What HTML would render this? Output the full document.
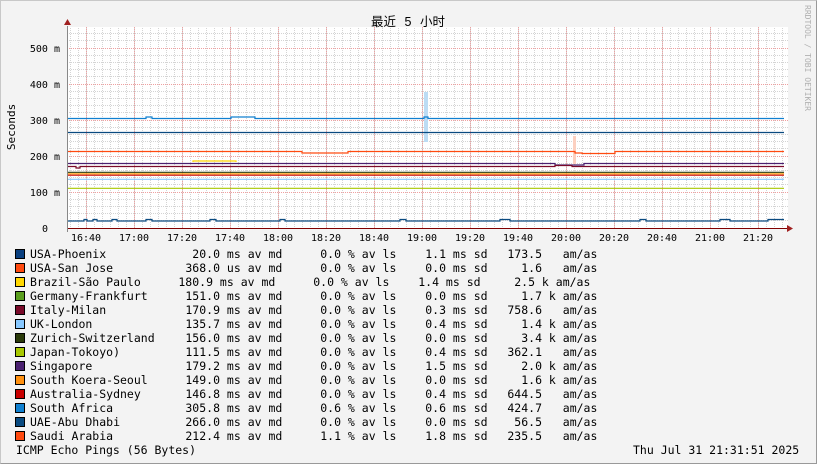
<!DOCTYPE html>
<html><head><meta charset="utf-8"><style>
html,body{margin:0;padding:0}
body{width:817px;height:464px;position:relative;overflow:hidden;background:#f3f3f3;font-family:"DejaVu Sans Mono","Liberation Mono","Noto Sans CJK SC",monospace;font-size:11.5px;color:#000}
.frame{position:absolute;left:0;top:0;width:815px;height:462px;border:1px solid #c8c8c8;border-right-color:#999;border-bottom-color:#999}
.r{position:absolute;left:0;height:14px;line-height:14px;width:817px;white-space:pre}
.r span{position:absolute;top:0}
.b{position:absolute;left:15px;top:2px;width:8px;height:8px;border:1px solid #000}
.n{left:30px}
.v{left:0;width:220px;text-align:right}
.p{left:0;width:341px;text-align:right}
.s{left:0;width:446px;text-align:right}
.a{left:0;width:542px;text-align:right}
</style></head><body>
<div class="frame"></div>
<svg width="817" height="464" style="position:absolute;left:0;top:0">
<defs>
<pattern id="mv" x="70" y="0" width="8" height="464" patternUnits="userSpaceOnUse"><line x1="0.5" y1="0" x2="0.5" y2="464" stroke="#d4d4d4" stroke-dasharray="1,1"/></pattern>
</defs>
<rect x="67" y="27" width="721" height="201" fill="#fff"/>
<rect x="67" y="27" width="721" height="201" fill="url(#mv)"/>
<g stroke="#d4d4d4" stroke-dasharray="1,1">
<line x1="67" x2="788" y1="220.5" y2="220.5"/><line x1="67" x2="788" y1="213.5" y2="213.5"/><line x1="67" x2="788" y1="206.5" y2="206.5"/><line x1="67" x2="788" y1="199.5" y2="199.5"/>
<line x1="67" x2="788" y1="184.5" y2="184.5"/><line x1="67" x2="788" y1="177.5" y2="177.5"/><line x1="67" x2="788" y1="170.5" y2="170.5"/><line x1="67" x2="788" y1="163.5" y2="163.5"/>
<line x1="67" x2="788" y1="148.5" y2="148.5"/><line x1="67" x2="788" y1="141.5" y2="141.5"/><line x1="67" x2="788" y1="134.5" y2="134.5"/><line x1="67" x2="788" y1="127.5" y2="127.5"/>
<line x1="67" x2="788" y1="112.5" y2="112.5"/><line x1="67" x2="788" y1="105.5" y2="105.5"/><line x1="67" x2="788" y1="98.5" y2="98.5"/><line x1="67" x2="788" y1="91.5" y2="91.5"/>
<line x1="67" x2="788" y1="76.5" y2="76.5"/><line x1="67" x2="788" y1="69.5" y2="69.5"/><line x1="67" x2="788" y1="62.5" y2="62.5"/><line x1="67" x2="788" y1="55.5" y2="55.5"/>
<line x1="67" x2="788" y1="40.5" y2="40.5"/><line x1="67" x2="788" y1="33.5" y2="33.5"/>
</g>
<g stroke="#f0a0a0" stroke-dasharray="1,1">
<line x1="67" x2="788" y1="192.5" y2="192.5"/><line x1="67" x2="788" y1="156.5" y2="156.5"/><line x1="67" x2="788" y1="120.5" y2="120.5"/><line x1="67" x2="788" y1="84.5" y2="84.5"/><line x1="67" x2="788" y1="48.5" y2="48.5"/>
<line x1="86.5" x2="86.5" y1="27" y2="228"/><line x1="134.5" x2="134.5" y1="27" y2="228"/><line x1="182.5" x2="182.5" y1="27" y2="228"/><line x1="230.5" x2="230.5" y1="27" y2="228"/><line x1="278.5" x2="278.5" y1="27" y2="228"/><line x1="326.5" x2="326.5" y1="27" y2="228"/><line x1="374.5" x2="374.5" y1="27" y2="228"/><line x1="422.5" x2="422.5" y1="27" y2="228"/><line x1="470.5" x2="470.5" y1="27" y2="228"/><line x1="518.5" x2="518.5" y1="27" y2="228"/><line x1="566.5" x2="566.5" y1="27" y2="228"/><line x1="614.5" x2="614.5" y1="27" y2="228"/><line x1="662.5" x2="662.5" y1="27" y2="228"/><line x1="710.5" x2="710.5" y1="27" y2="228"/><line x1="758.5" x2="758.5" y1="27" y2="228"/>
</g>
<rect x="424" y="92" width="4" height="50" fill="#bcdcf4"/>
<rect x="573" y="136" width="3" height="28" fill="#fcd0c0"/>
<g fill="none" stroke-width="1.2">
<polyline stroke="#1080d0" points="67,118.5 146,118.5 146,117 152,117 152,118.5 231,118.5 231,117 234,117 234,117 255,117 255,118.5 424,118.5 424,117 428,117 428,118.5 784,118.5"/>
<polyline stroke="#0a4a80" points="67,132.5 784,132.5"/>
<polyline stroke="#ff4a10" points="67,151.5 302,151.5 302,153 348,153 348,151.5 575,151.5 575,153 582,153 582,153.5 615,153.5 615,151.5 784,151.5"/>
<polyline stroke="#4a2070" points="67,163.5 555,163.5 555,165 584,165 584,163.5 784,163.5"/>
<polyline stroke="#ffd700" points="193,162 193,161 236,161 236,162"/>
<polyline stroke="#7a0a2a" points="67,166.5 76,166.5 76,168 80,168 80,166.5 555,166.5 555,165.5 572,165.5 572,166.5 784,166.5"/>
<polyline stroke="#2a3a0a" points="67,172.3 784,172.3"/>
<polyline stroke="#ffa010" points="67,173.8 784,173.8"/>
<polyline stroke="#c80000" points="67,175.2 784,175.2"/>
<polyline stroke="#88c8ff" points="67,179.3 784,179.3"/>
<polyline stroke="#a8c800" points="67,188.3 784,188.3"/>
<polyline stroke="#0a4a80" points="67,221 84,221 84,219.5 87,219.5 87,221 93,221 93,219.5 97,219.5 97,221 112,221 112,219.5 117,219.5 117,221 146,221 146,219.5 152,219.5 152,221 210,221 210,219.5 216,219.5 216,221 280,221 280,219.5 285,219.5 285,221 400,221 400,219.5 406,219.5 406,221 500,221 500,219.5 510,219.5 510,221 640,221 640,219.5 646,219.5 646,221 720,221 720,219.5 730,219.5 730,221 768,221 768,219.5 784,219.5"/>
</g>
<line x1="67" x2="790" y1="228.5" y2="228.5" stroke="#800000" stroke-width="1"/>
<polygon points="787,225 793,228.5 787,232" fill="#a02020"/>
<line x1="67.5" x2="67.5" y1="26" y2="232" stroke="#888"/>
<polygon points="64,25 67.5,19 71,25" fill="#a02020"/>
<g font-family="DejaVu Sans Mono,monospace" font-size="10" text-anchor="end" fill="#000">
<text x="60" y="52">500 m</text><text x="60" y="88">400 m</text><text x="60" y="124">300 m</text><text x="60" y="160">200 m</text><text x="60" y="196">100 m</text><text x="48" y="232">0</text>
</g>
<g font-family="DejaVu Sans Mono,monospace" font-size="10" text-anchor="middle" fill="#000">
<text x="86" y="241">16:40</text><text x="134" y="241">17:00</text><text x="182" y="241">17:20</text><text x="230" y="241">17:40</text><text x="278" y="241">18:00</text><text x="326" y="241">18:20</text><text x="374" y="241">18:40</text><text x="422" y="241">19:00</text><text x="470" y="241">19:20</text><text x="518" y="241">19:40</text><text x="566" y="241">20:00</text><text x="614" y="241">20:20</text><text x="662" y="241">20:40</text><text x="710" y="241">21:00</text><text x="758" y="241">21:20</text>
</g>
<text x="15" y="127" transform="rotate(-90 15 127)" text-anchor="middle" font-family="DejaVu Sans Mono,monospace" font-size="11">Seconds</text>
<text x="408" y="26" text-anchor="middle" font-family="Liberation Sans,Noto Sans CJK SC,sans-serif" font-size="12.5" word-spacing="5">最近 5 小时</text>
<text x="805" y="5" transform="rotate(90 805 5)" font-family="DejaVu Sans Mono,monospace" font-size="8" fill="#b0b0b0">RRDTOOL / TOBI OETIKER</text>
</svg>

<div class="r" style="top:247px"><i class="b" style="background:#0a4080"></i><span class="n">USA-Phoenix</span><span class="v">20.0</span><span style="left:220px"> ms av md</span><span class="p">0.0</span><span style="left:341px"> % av ls</span><span class="s">1.1</span><span style="left:446px"> ms sd</span><span class="a">173.5</span><span style="left:542px">   am/as</span></div>
<div class="r" style="top:261px"><i class="b" style="background:#ff4a10"></i><span class="n">USA-San Jose</span><span class="v">368.0</span><span style="left:220px"> us av md</span><span class="p">0.0</span><span style="left:341px"> % av ls</span><span class="s">0.0</span><span style="left:446px"> ms sd</span><span class="a">1.6</span><span style="left:542px">   am/as</span></div>
<div class="r" style="top:275px"><i class="b" style="background:#ffd700"></i><span class="n">Brazil-São Paulo</span><span class="v" style="width:213px">180.9</span><span style="left:213px"> ms av md</span><span class="p" style="width:334px">0.0</span><span style="left:334px"> % av ls</span><span class="s" style="width:439px">1.4</span><span style="left:439px"> ms sd</span><span class="a" style="width:535px">2.5</span><span style="left:535px"> k am/as</span></div>
<div class="r" style="top:289px"><i class="b" style="background:#5a9e1e"></i><span class="n">Germany-Frankfurt</span><span class="v">151.0</span><span style="left:220px"> ms av md</span><span class="p">0.0</span><span style="left:341px"> % av ls</span><span class="s">0.0</span><span style="left:446px"> ms sd</span><span class="a">1.7</span><span style="left:542px"> k am/as</span></div>
<div class="r" style="top:303px"><i class="b" style="background:#7a0a2a"></i><span class="n">Italy-Milan</span><span class="v">170.9</span><span style="left:220px"> ms av md</span><span class="p">0.0</span><span style="left:341px"> % av ls</span><span class="s">0.3</span><span style="left:446px"> ms sd</span><span class="a">758.6</span><span style="left:542px">   am/as</span></div>
<div class="r" style="top:317px"><i class="b" style="background:#88c8ff"></i><span class="n">UK-London</span><span class="v">135.7</span><span style="left:220px"> ms av md</span><span class="p">0.0</span><span style="left:341px"> % av ls</span><span class="s">0.4</span><span style="left:446px"> ms sd</span><span class="a">1.4</span><span style="left:542px"> k am/as</span></div>
<div class="r" style="top:331px"><i class="b" style="background:#2a3a0a"></i><span class="n">Zurich-Switzerland</span><span class="v">156.0</span><span style="left:220px"> ms av md</span><span class="p">0.0</span><span style="left:341px"> % av ls</span><span class="s">0.0</span><span style="left:446px"> ms sd</span><span class="a">3.4</span><span style="left:542px"> k am/as</span></div>
<div class="r" style="top:345px"><i class="b" style="background:#a8c800"></i><span class="n">Japan-Tokoyo)</span><span class="v">111.5</span><span style="left:220px"> ms av md</span><span class="p">0.0</span><span style="left:341px"> % av ls</span><span class="s">0.4</span><span style="left:446px"> ms sd</span><span class="a">362.1</span><span style="left:542px">   am/as</span></div>
<div class="r" style="top:359px"><i class="b" style="background:#4a2070"></i><span class="n">Singapore</span><span class="v">179.2</span><span style="left:220px"> ms av md</span><span class="p">0.0</span><span style="left:341px"> % av ls</span><span class="s">1.5</span><span style="left:446px"> ms sd</span><span class="a">2.0</span><span style="left:542px"> k am/as</span></div>
<div class="r" style="top:373px"><i class="b" style="background:#ff9010"></i><span class="n">South Koera-Seoul</span><span class="v">149.0</span><span style="left:220px"> ms av md</span><span class="p">0.0</span><span style="left:341px"> % av ls</span><span class="s">0.0</span><span style="left:446px"> ms sd</span><span class="a">1.6</span><span style="left:542px"> k am/as</span></div>
<div class="r" style="top:387px"><i class="b" style="background:#c80000"></i><span class="n">Australia-Sydney</span><span class="v">146.8</span><span style="left:220px"> ms av md</span><span class="p">0.0</span><span style="left:341px"> % av ls</span><span class="s">0.4</span><span style="left:446px"> ms sd</span><span class="a">644.5</span><span style="left:542px">   am/as</span></div>
<div class="r" style="top:401px"><i class="b" style="background:#1080d0"></i><span class="n">South Africa</span><span class="v">305.8</span><span style="left:220px"> ms av md</span><span class="p">0.6</span><span style="left:341px"> % av ls</span><span class="s">0.6</span><span style="left:446px"> ms sd</span><span class="a">424.7</span><span style="left:542px">   am/as</span></div>
<div class="r" style="top:415px"><i class="b" style="background:#0a4a80"></i><span class="n">UAE-Abu Dhabi</span><span class="v">266.0</span><span style="left:220px"> ms av md</span><span class="p">0.0</span><span style="left:341px"> % av ls</span><span class="s">0.0</span><span style="left:446px"> ms sd</span><span class="a">56.5</span><span style="left:542px">   am/as</span></div>
<div class="r" style="top:429px"><i class="b" style="background:#ff4a10"></i><span class="n">Saudi Arabia</span><span class="v">212.4</span><span style="left:220px"> ms av md</span><span class="p">1.1</span><span style="left:341px"> % av ls</span><span class="s">1.8</span><span style="left:446px"> ms sd</span><span class="a">235.5</span><span style="left:542px">   am/as</span></div>
<div class="r" style="top:443px"><span style="left:16px">ICMP Echo Pings (56 Bytes)</span><span style="left:633px">Thu Jul 31 21:31:51 2025</span></div>
</body></html>
